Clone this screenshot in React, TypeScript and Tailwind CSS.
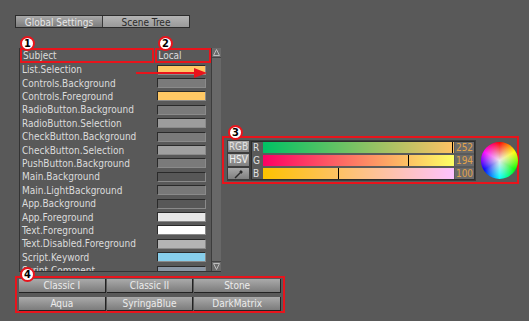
import React from "react";

const rows: { name: string; color: string }[] = [
  { name: "List.Selection", color: "#ffc864" },
  { name: "Controls.Background", color: "#7a7a7a" },
  { name: "Controls.Foreground", color: "#ffc864" },
  { name: "RadioButton.Background", color: "#7a7a7a" },
  { name: "RadioButton.Selection", color: "#9c9c9c" },
  { name: "CheckButton.Background", color: "#7a7a7a" },
  { name: "CheckButton.Selection", color: "#a0a0a0" },
  { name: "PushButton.Background", color: "#7a7a7a" },
  { name: "Main.Background", color: "#575757" },
  { name: "Main.LightBackground", color: "#787878" },
  { name: "App.Background", color: "#585858" },
  { name: "App.Foreground", color: "#e6e6e6" },
  { name: "Text.Foreground", color: "#ffffff" },
  { name: "Text.Disabled.Foreground", color: "#b4b4b4" },
  { name: "Script.Keyword", color: "#87ceeb" },
  { name: "Script.Comment", color: "#8a96a4" },
];

const sliders = [
  { label: "R", value: 252, bg: "linear-gradient(to right, #00c264, #ffc264)" },
  { label: "G", value: 194, bg: "linear-gradient(to right, #fc0064, #fcff64)" },
  { label: "B", value: 100, bg: "linear-gradient(to right, #fcc200, #fcc2ff)" },
];

const presets = ["Classic I", "Classic II", "Stone", "Aqua", "SyringaBlue", "DarkMatrix"];

function Badge({ n }: { n: number }) {
  return (
    <div className="absolute w-[15px] h-[15px] rounded-full bg-white border-2 border-[#e8141c] flex items-center justify-center text-[11px] font-bold leading-none text-black">
      {n}
    </div>
  );
}

export default function App() {
  return (
    <div
      className="relative w-[529px] h-[321px] bg-[#595959] overflow-hidden pt-[15px] pl-[15px] text-[#dcdcdc]"
      style={{ fontFamily: '"DejaVu Sans Condensed", "DejaVu Sans", sans-serif' }}
    >
      {/* tabs */}
      <div className="flex h-[13px] w-[175px] text-[10px] leading-[13px] border border-[#2c2c2c]">
        <div className="w-[87px] text-center bg-gradient-to-b from-[#a8a8a8] to-[#7c7c7c] text-[#e8e8e8] border-r border-[#3a3a3a]">
          Global Settings
        </div>
        <div className="flex-1 text-center bg-gradient-to-b from-[#b4b4b4] to-[#9a9a9a] text-[#2a2a2a]">
          Scene Tree
        </div>
      </div>

      <div className="flex items-start mt-[20px]">
        {/* property list */}
        <div className="relative shrink-0 ml-[4px] w-[202px] h-[224px] flex border-l border-b border-[#333] text-[10px]">
          <div className="w-[191px] flex flex-col overflow-hidden">
            <div className="flex h-[15px] shrink-0 leading-[13px]">
              <div className="w-[134px] border border-[#333] pl-[2px]">Subject</div>
              <div className="w-[55px] ml-[2px] border border-[#333] pl-[2px]">Local</div>
            </div>
            {rows.map((r) => (
              <div key={r.name} className="flex items-center h-[13.4px] shrink-0 pl-[2px]">
                <span className="w-[135px] whitespace-nowrap">{r.name}</span>
                <div
                  className="w-[49px] h-[10px] border-t border-l border-[#2a2a2a] border-b border-r border-b-[#8a8a8a] border-r-[#8a8a8a]"
                  style={{ backgroundColor: r.color }}
                />
              </div>
            ))}
          </div>
          {/* scrollbar */}
          <div className="w-[10px] ml-[1px] flex flex-col bg-[#6a6a6a] border-l border-[#3c3c3c]">
            <div className="h-[10px] flex items-center justify-center border-b border-[#444]">
              <svg width="7" height="7" viewBox="0 0 7 7">
                <path d="M0.5 6.5 L3.5 0.5 L6.5 6.5 Z" fill="none" stroke="#bdbdbd" strokeWidth="1" />
              </svg>
            </div>
            <div className="flex-1 bg-[#686868]" />
            <div className="h-[10px] flex items-center justify-center border-t border-[#444]">
              <svg width="7" height="7" viewBox="0 0 7 7">
                <path d="M0.5 0.5 L3.5 6.5 L6.5 0.5 Z" fill="none" stroke="#bdbdbd" strokeWidth="1" />
              </svg>
            </div>
          </div>

          {/* annotations */}
          <div className="absolute left-[0px] top-[0px] w-[134px] h-[15px] border-2 border-[#e8141c]" />
          <div className="absolute left-[135px] top-[0px] w-[56px] h-[15px] border-2 border-[#e8141c]" />
          <div className="absolute left-[0px] top-[-12px]"><Badge n={1} /></div>
          <div className="absolute left-[138px] top-[-12px]"><Badge n={2} /></div>
          <svg className="absolute left-[116px] top-[19px]" width="72" height="12" viewBox="0 0 72 12">
            <line x1="0" y1="6" x2="62" y2="6" stroke="#e8141c" strokeWidth="2" />
            <path d="M58 1 L71 6 L58 11 Z" fill="#e8141c" />
          </svg>
        </div>

        {/* colour editor */}
        <div className="relative shrink-0 ml-[1px] mt-[88px] w-[297px] h-[48px] border-2 border-[#e8141c] flex items-center pl-[3px]">
          <div className="shrink-0 flex items-center bg-[#3c3c3c] p-[1px]">
            <div className="flex flex-col gap-[2px] text-[10px] leading-[11px]">
              <div className="w-[21px] h-[11px] bg-gradient-to-b from-[#a8a8a8] to-[#808080] text-center text-[#e4e4e4]">RGB</div>
              <div className="w-[21px] h-[12px] bg-gradient-to-b from-[#a8a8a8] to-[#808080] text-center text-[#f4f4f4]">HSV</div>
              <div className="w-[21px] h-[11px] bg-gradient-to-b from-[#a8a8a8] to-[#808080] flex items-center justify-center">
                <svg width="10" height="10" viewBox="0 0 10 10">
                  <path d="M1 9 L6 4" stroke="#2a2a2a" strokeWidth="1.5" />
                  <path d="M6 2 L8 4" stroke="#2a2a2a" strokeWidth="2.5" />
                </svg>
              </div>
            </div>
            <div className="ml-[2px] flex flex-col gap-[2px] bg-[#5a5a5a] border border-[#2c2c2c]">
              {sliders.map((s) => (
                <div key={s.label} className="flex items-center h-[11px]">
                  <span className="w-[11px] text-[10px] leading-[11px] pl-[1px] text-[#e0e0e0]">{s.label}</span>
                  <div className="relative w-[191px] h-[11px]" style={{ background: s.bg }}>
                    <div
                      className="absolute top-0 bottom-0 w-[1px] bg-black"
                      style={{ left: `${(s.value / 255) * 100}%` }}
                    />
                  </div>
                  <span className="w-[19px] ml-[1px] h-[11px] bg-[#6a6a6a] text-[10px] leading-[11px] text-[#e0a24a] text-center">
                    {s.value}
                  </span>
                </div>
              ))}
            </div>
          </div>
          <div
            className="shrink-0 ml-[5px] w-[37px] h-[37px] rounded-full"
            style={{
              background:
                "radial-gradient(circle, rgba(235,235,235,1) 0%, rgba(235,235,235,0) 70%), conic-gradient(#ff0000, #ffff00, #00ff00, #00ffff, #0000ff, #ff00ff, #ff0000)",
            }}
          />
          <div className="absolute left-[4px] top-[-13px]"><Badge n={3} /></div>
        </div>
      </div>

      {/* presets */}
      <div className="relative mt-[4px] w-[270px] h-[37px] border-2 border-[#e8141c] px-[2px] py-[1px] grid grid-cols-3 gap-x-[1px] gap-y-[4px] text-[10px]">
        {presets.map((p) => (
          <div
            key={p}
            className="h-[14px] leading-[13px] text-center bg-gradient-to-b from-[#aaaaaa] to-[#7c7c7c] text-[#ececec] border-b border-r border-[#222]"
          >
            {p}
          </div>
        ))}
        <div className="absolute left-[3px] top-[-11px]"><Badge n={4} /></div>
      </div>
    </div>
  );
}
